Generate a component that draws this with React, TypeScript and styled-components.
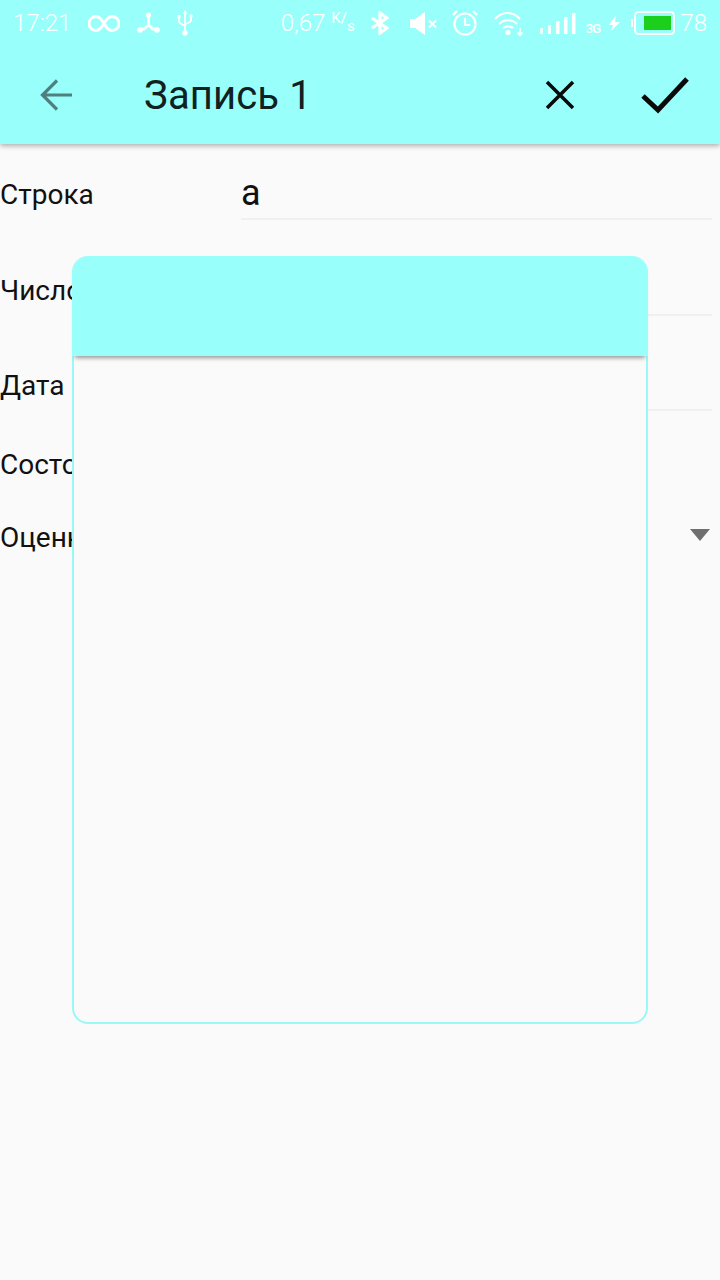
import React from "react";
import styled, { createGlobalStyle } from "styled-components";

const accent = "#98fffb";

const GlobalStyle = createGlobalStyle`
	html, body {
		margin: 0;
		padding: 0;
		background: #fafafa;
	}
	body {
		font-family: Roboto, "Noto Sans", sans-serif;
	}
	* {
		box-sizing: border-box;
	}
`;

const Page = styled.div`
	position: relative;
	width: 720px;
	height: 1280px;
	overflow: hidden;
	background: #fafafa;
`;

const Header = styled.header`
	height: 144px;
	background: ${accent};
	box-shadow: 0 2px 5px rgba(0, 0, 0, 0.3);
	position: relative;
	z-index: 1;
`;

const StatusBar = styled.div`
	height: 46px;
	display: flex;
	align-items: center;
	padding: 0 13px;
	color: #fff;
	font-size: 24px;
	font-weight: 300;
`;

const StatusGroup = styled.div`
	display: flex;
	align-items: center;
	gap: 17px;
`;

const Spacer = styled.div`
	flex: 1;
`;

const Slot = styled.span<{ $left: number }>`
	display: flex;
	align-items: center;
	margin-left: ${(p) => p.$left}px;
`;

const SpeedUnit = styled.span`
	display: flex;
	font-size: 15px;
	font-weight: 400;
	margin-left: 6px;
	line-height: 15px;
	height: 24px;
`;

const UnitLetter = styled.span<{ $drop?: boolean }>`
	margin-top: ${(p) => (p.$drop ? 8 : 0)}px;
`;

const NetworkType = styled.span`
	font-size: 13px;
	font-weight: 500;
	margin-top: 10px;
	letter-spacing: -0.8px;
`;

const Toolbar = styled.div`
	height: 98px;
	display: flex;
	align-items: center;
	padding: 0 31px 0 40px;
`;

const Title = styled.h1`
	flex: 1;
	margin: 0 0 0 72px;
	font-size: 40px;
	font-weight: 400;
	letter-spacing: 0.15px;
	color: #0f2120;
`;

const ActionIcon = styled.svg<{ $left?: number }>`
	display: block;
	margin-left: ${(p) => p.$left ?? 0}px;
`;

const Form = styled.div`
	padding-top: 24px;
`;

const Row = styled.div<{ $height: number }>`
	height: ${(p) => p.$height}px;
	display: flex;
	align-items: flex-start;
`;

const Label = styled.div`
	width: 241px;
	padding-top: 11px;
	font-size: 28px;
	color: #111;
	line-height: 32px;
	white-space: nowrap;
`;

const Field = styled.div`
	width: 471px;
	height: 52px;
	font-size: 36px;
	line-height: 50px;
	color: #111;
	border-bottom: 2px solid #f0f0f0;
`;

const DropdownRow = styled(Row)`
	justify-content: space-between;
	padding-right: 10px;
`;

const Caret = styled.div`
	width: 0;
	height: 0;
	margin-top: 18px;
	border-left: 10px solid transparent;
	border-right: 10px solid transparent;
	border-top: 12px solid #6f6f6f;
`;

const Dialog = styled.div`
	position: absolute;
	left: 72px;
	top: 256px;
	width: 576px;
	height: 768px;
	z-index: 2;
	display: flex;
	flex-direction: column;
`;

const DialogHeader = styled.div`
	height: 100px;
	position: relative;
	background: ${accent};
	border-radius: 16px 16px 0 0;
	box-shadow: 0 5px 4px -3px rgba(0, 0, 0, 0.4);
`;

const DialogBody = styled.div`
	flex: 1;
	background: #fafafa;
	border: 2px solid #9cf8f4;
	border-top: none;
	border-radius: 0 0 16px 16px;
`;

const InfinityIcon = () => (
	<svg width="32" height="17" viewBox="0 0 32 17" fill="none" stroke="#fff" strokeWidth="3">
		<path d="M16 8.500C13.500 4 11 1.500 8 1.500a7 7 0 0 0 0 14c3 0 5.500-2.500 8-7s5-7 8-7a7 7 0 0 1 0 14c-3 0-5.500-2.500-8-7z" />
	</svg>
);

const TripodIcon = () => (
	<svg width="23" height="22" viewBox="0 0 23 22" fill="#fff" stroke="#fff">
		<path d="M11.500 3v10L7 17H3M11.500 13l4.500 4h4" strokeWidth="2.800" fill="none" />
		<circle cx="11.500" cy="3" r="2.600" stroke="none" />
		<circle cx="3" cy="18" r="2.800" stroke="none" />
		<circle cx="20" cy="18" r="2.800" stroke="none" />
	</svg>
);

const UsbIcon = () => (
	<svg width="16" height="26" viewBox="0 0 16 26" fill="none" stroke="#fff" strokeWidth="1.800">
		<path d="M8 3v19M2 8v3c0 2.500 2.500 3 6 5M14 7v3c0 2.500-2.500 3-6 4" />
		<path d="M8 0l2.500 4h-5z" fill="#fff" stroke="none" />
		<circle cx="8" cy="23" r="2.700" fill="#fff" stroke="none" />
		<rect x="0.500" y="5" width="3" height="3.500" fill="#fff" stroke="none" />
		<circle cx="14" cy="6" r="1.800" fill="#fff" stroke="none" />
	</svg>
);

const BluetoothIcon = () => (
	<svg width="18" height="24" viewBox="0 0 18 24" fill="none" stroke="#fff" strokeWidth="3.200">
		<path d="M1 7l15 10-7 5V2l7 5L1 17" />
	</svg>
);

const MuteIcon = () => (
	<svg width="27" height="23" viewBox="0 0 27 23" fill="#fff">
		<path d="M0 7h5l10-7v23L5 16H0z" />
		<path d="M19 8.500l7 7M26 8.500l-7 7" stroke="#fff" strokeWidth="2" />
	</svg>
);

const AlarmIcon = () => (
	<svg width="26" height="26" viewBox="0 0 26 26" fill="none" stroke="#fff" strokeWidth="2.200">
		<circle cx="13" cy="14" r="10.500" />
		<path d="M13 8v7h5" />
		<path d="M1 5l4-4M25 5l-4-4" />
	</svg>
);

const WifiIcon = () => (
	<svg width="29" height="25" viewBox="0 0 29 25" fill="none" stroke="#fff" strokeWidth="2.200">
		<path d="M1 8c7-8 18-8 25 0M5 13c5-5 13-5 18 0M9 17c3-2 7-2 10 0" />
		<circle cx="14" cy="21.500" r="2.500" fill="#fff" stroke="none" />
		<path d="M26 17v7M23.500 21.500l2.500 3 2.500-3" strokeWidth="1.600" />
	</svg>
);

const SignalIcon = () => (
	<svg width="36" height="21" viewBox="0 0 36 21" fill="#fff">
		<rect x="0" y="15" width="3" height="6" opacity="0.8" />
		<rect x="8" y="12" width="3" height="9" opacity="0.85" />
		<rect x="16" y="8" width="3.500" height="13" />
		<rect x="24" y="4" width="3.500" height="17" />
		<rect x="32" y="0" width="3.500" height="21" />
	</svg>
);

const BoltIcon = () => (
	<svg width="11" height="16" viewBox="0 0 11 16" fill="#fff">
		<path d="M7 0L0 10h4l-2 6 9-9H6z" />
	</svg>
);

const BatteryIcon = () => (
	<svg width="45" height="24" viewBox="0 0 45 24">
		<path d="M3 8H1v8h2z" fill="#fff" />
		<rect x="5" y="1" width="39" height="22" rx="3.500" fill="none" stroke="#fff" strokeWidth="2" />
		<rect x="14" y="5" width="27" height="14" fill="#1ccf1c" />
	</svg>
);

const App = () => {
	return (
		<Page>
			<GlobalStyle />
			<Header>
				<StatusBar>
					<StatusGroup>
						<span>17:21</span>
						<InfinityIcon />
						<TripodIcon />
						<UsbIcon />
					</StatusGroup>
					<Spacer />
					<span>0,67</span>
					<SpeedUnit>
						<UnitLetter>K/</UnitLetter>
						<UnitLetter $drop>s</UnitLetter>
					</SpeedUnit>
					<Slot $left={16}><BluetoothIcon /></Slot>
					<Slot $left={21}><MuteIcon /></Slot>
					<Slot $left={15}><AlarmIcon /></Slot>
					<Slot $left={16}><WifiIcon /></Slot>
					<Slot $left={17}><SignalIcon /></Slot>
					<Slot $left={10}><NetworkType>3G</NetworkType></Slot>
					<Slot $left={9}><BoltIcon /></Slot>
					<Slot $left={10}><BatteryIcon /></Slot>
					<Slot $left={5}>78</Slot>
				</StatusBar>
				<Toolbar>
					<ActionIcon width="32" height="32" viewBox="0 0 32 32" fill="none" stroke="#4f7f7e" strokeWidth="3.200">
						<path d="M32 16H3M17 1.500L2.500 16 17 30.500" />
					</ActionIcon>
					<Title>Запись 1</Title>
					<ActionIcon width="30" height="30" viewBox="0 0 30 30" fill="none" stroke="#0a0a0a" strokeWidth="3.500">
						<path d="M2 2l26 26M28 2L2 28" />
					</ActionIcon>
					<ActionIcon $left={66} width="48" height="38" viewBox="0 0 48 38" fill="none" stroke="#0a0a0a" strokeWidth="5">
						<path d="M2 20l15 14L46 3" />
					</ActionIcon>
				</Toolbar>
			</Header>
			<Form>
				<Row $height={96}>
					<Label>Строка</Label>
					<Field>а</Field>
				</Row>
				<Row $height={95}>
					<Label>Число</Label>
					<Field />
				</Row>
				<Row $height={79}>
					<Label>Дата</Label>
					<Field />
				</Row>
				<Row $height={73}>
					<Label>Состояние</Label>
				</Row>
				<DropdownRow $height={80}>
					<Label>Оценка</Label>
					<Caret />
				</DropdownRow>
			</Form>
			<Dialog>
				<DialogHeader />
				<DialogBody />
			</Dialog>
		</Page>
	);
};

export default App;
